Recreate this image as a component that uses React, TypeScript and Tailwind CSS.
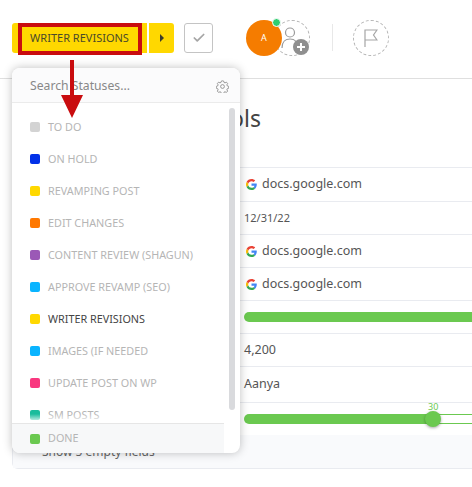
import { Check } from "lucide-react";

const statuses = [
  { name: "TO DO", color: "bg-[#d3d3d3]" },
  { name: "ON HOLD", color: "bg-[#0231e8]" },
  { name: "REVAMPING POST", color: "bg-[#ffd800]" },
  { name: "EDIT CHANGES", color: "bg-[#ff7800]" },
  { name: "CONTENT REVIEW (SHAGUN)", color: "bg-[#9b59b6]" },
  { name: "APPROVE REVAMP (SEO)", color: "bg-[#0ab4ff]" },
  { name: "WRITER REVISIONS", color: "bg-[#ffd800]", active: true },
  { name: "IMAGES (IF NEEDED", color: "bg-[#0ab4ff]" },
  { name: "UPDATE POST ON WP", color: "bg-[#f9377f]" },
  { name: "SM POSTS", color: "bg-[#1bbc9c]" },
];

function GoogleIcon() {
  return (
    <svg width="11" height="11" viewBox="0 0 48 48" className="ml-[2px] mr-[5px] shrink-0">
      <path fill="#EA4335" d="M24 9.500c3.500 0 6.700 1.200 9.200 3.600l6.900-6.900C35.900 2.400 30.500 0 24 0 14.600 0 6.500 5.400 2.600 13.200l8 6.200C12.500 13.700 17.800 9.500 24 9.500z" />
      <path fill="#4285F4" d="M47 24.500c0-1.600-.1-3.100-.4-4.500H24v9h12.900c-.6 3-2.200 5.500-4.700 7.200l7.700 6C44.400 38 47 31.800 47 24.500z" />
      <path fill="#FBBC05" d="M10.500 28.600c-.5-1.400-.8-3-.8-4.600s.3-3.200.8-4.600l-8-6.200C.9 16.500 0 20.100 0 24s.9 7.500 2.600 10.800l7.900-6.200z" />
      <path fill="#34A853" d="M24 48c6.500 0 11.900-2.100 15.900-5.800l-7.700-6c-2.200 1.400-4.900 2.300-8.200 2.300-6.200 0-11.500-4.200-13.400-9.900l-8 6.200C6.500 42.600 14.600 48 24 48z" />
    </svg>
  );
}

function LinkValue() {
  return (
    <div className="flex items-center text-[12.5px] text-[#555]">
      <GoogleIcon />
      docs.google.com
    </div>
  );
}

function Row({ children, className = "h-[33px]" }: { children: React.ReactNode; className?: string }) {
  return <div className={`flex items-center border-b border-[#e9ebf0] pl-[231px] ${className}`}>{children}</div>;
}

function StatusMenu() {
  return (
    <div className="absolute left-3 top-[68px] flex h-[385px] w-[228px] flex-col overflow-hidden rounded-lg bg-white shadow-[0_0_10px_rgba(0,0,0,0.25)]">
      <div className="flex h-[35px] shrink-0 items-center justify-between border-b border-[#ebebeb] bg-[#fbfbfc] pl-[18px] pr-[11px] pt-[2px]">
        <span className="text-[12.2px] text-[#888]">Search Statuses...</span>
        <svg width="13" height="13" viewBox="0 0 24 24" fill="none" stroke="#8a8a8a" strokeWidth="1.6">
          <path d="M12 1.500l2 .3.8 2.700 1.900.8 2.500-1.300 2.300 2.600-1.400 2.300.7 2 2.700.9v3.400l-2.700.9-.7 2 1.400 2.300-2.300 2.600-2.500-1.300-1.900.8-.8 2.700h-4l-.8-2.700-1.900-.8-2.500 1.300-2.300-2.600 1.400-2.300-.7-2-2.700-.9v-3.400l2.700-.9.7-2-1.400-2.300 2.300-2.600 2.500 1.300 1.900-.8.800-2.700z" />
          <circle cx="12" cy="12" r="3.500" />
        </svg>
      </div>
      <div className="flex-1 overflow-hidden pt-2">
        {statuses.map((s) => (
          <div key={s.name} className="flex h-8 items-center pl-[18px]">
            <span className={`mr-2 h-[10px] w-[10px] rounded-[2px] ${s.color}`} />
            <span className={`text-[10.8px] ${s.active ? "text-[#444]" : "text-[#b5b5b5]"}`}>{s.name}</span>
          </div>
        ))}
      </div>
      <div className="absolute bottom-[30px] left-0 h-[9px] w-[212px] bg-gradient-to-b from-transparent to-white" />
      <div className="absolute bottom-0 left-0 flex h-[30px] w-[212px] items-center border-t border-[#e6e6e6] bg-[#f7f8f9] pl-[18px]">
        <span className="mr-2 h-[10px] w-[10px] rounded-[2px] bg-[#6bc950]" />
        <span className="text-[10.8px] text-[#b5b5b5]">DONE</span>
      </div>
      <div className="absolute right-[5px] top-10 h-[302px] w-[6px] rounded-sm bg-[#d9dadd]" />
    </div>
  );
}

export default function App() {
  return (
    <div className="relative h-[487px] w-[472px] overflow-hidden bg-white font-['Noto_Sans',sans-serif]">
      {/* top bar */}
      <div className="flex h-[79px] items-start border-b border-[#dfdfdf] pl-3 pt-[23px]">
        <div className="flex h-[30px] items-stretch">
          <div className="flex w-[135px] items-center justify-center rounded-l-[3px] bg-[#ffd800] text-[11px] text-[#4a4a2a]">
            WRITER REVISIONS
          </div>
          <div className="ml-[2px] flex w-[25px] items-center justify-center rounded-r-[3px] bg-[#ffd800]">
            <svg width="6" height="8" viewBox="0 0 6 8">
              <path d="M1 0l4 4-4 4z" fill="#3d3d2a" />
            </svg>
          </div>
        </div>
        <div className="ml-[10px] flex h-[30px] w-[29px] items-center justify-center rounded-[3px] border border-[#c4c4c4]">
          <Check size={14} strokeWidth={3} className="text-[#a5a5a5]" />
        </div>
        <div className="relative ml-[33px] -mt-[3px] h-9 w-9">
          <div className="absolute left-[28px] top-0 h-9 w-9 rounded-full border border-dashed border-[#b5b5b5]" />
          <svg width="24" height="28" viewBox="0 0 24 28" fill="none" stroke="#9a9a9a" strokeWidth="1.200" className="absolute left-[35px] top-[6px]">
            <circle cx="9" cy="6.500" r="4.500" />
            <path d="M1 22c0-6 3.500-9 8-9s8 3 8 9" />
          </svg>
          <div className="absolute left-[47px] top-[19px] flex h-4 w-4 items-center justify-center rounded-full bg-[#8f8f8f]">
            <svg width="10" height="10" viewBox="0 0 10 10">
              <path d="M5 1v8M1 5h8" stroke="#fff" strokeWidth="2" />
            </svg>
          </div>
          <div className="absolute inset-0 flex items-center justify-center rounded-full bg-[#f57c00] text-[9px] text-white">A</div>
          <div className="absolute left-[26px] top-[-2px] box-content h-[7px] w-[7px] rounded-full border border-white bg-[#2ecd6f]" />
        </div>
        <div className="ml-[50px] mt-[1px] h-[27px] w-px bg-[#e8e8e8]" />
        <div className="ml-[20px] -mt-[3px] flex h-9 w-9 items-center justify-center rounded-full border border-dashed border-[#b5b5b5]">
          <svg width="14" height="18" viewBox="0 0 14 18" fill="none" stroke="#a5a5a5" strokeWidth="1.200">
            <path d="M1 18V1h12l-3.500 5L13 11H1" />
          </svg>
        </div>
      </div>

      {/* page body */}
      <div className="h-[88px] pl-[205px] pt-[23px] text-[23px] leading-8 text-[#444]">Tools</div>
      <div className="ml-3 w-[700px] rounded-b-md border-x border-b border-[#e9ebf0]">
        <div className="border-t border-[#e9ebf0]">
          <Row className="h-[34px]"><LinkValue /></Row>
          <Row><span className="text-[11px] text-[#555]">12/31/22</span></Row>
          <Row><LinkValue /></Row>
          <Row><LinkValue /></Row>
          <Row>
            <div className="h-[10px] w-full rounded-l-full bg-[#6bc950]" />
          </Row>
          <Row><span className="text-[12.5px] text-[#555]">4,200</span></Row>
          <Row className="h-[36px]"><span className="text-[12.5px] text-[#555]">Aanya</span></Row>
          <div className="flex h-[32px] items-start pl-[231px] pt-[11px]">
            <div className="relative flex h-[10px] w-full items-stretch">
              <div className="h-full w-[188px] rounded-l-full bg-[#6bc950]" />
              <div className="flex-1 border-y border-[#6bc950]" />
              <div className="absolute left-[181px] top-[-3px] h-4 w-4 rounded-full bg-[#6bc950] shadow-[0_1px_3px_rgba(0,0,0,0.35)]" />
              <span className="absolute left-[184px] top-[-13px] text-[9px] leading-3 text-[#6bc950]">30</span>
            </div>
          </div>
          <div className="flex h-[33px] items-center bg-[#f9fafc] pl-[29px] text-[12px] text-[#666]">
            Show 5 empty fields
          </div>
        </div>
      </div>

      <StatusMenu />

      {/* red annotation */}
      <div className="pointer-events-none absolute left-[18px] top-[23px] h-8 w-[124px] border-4 border-[#c90c0f]" />
      <svg width="24" height="58" viewBox="0 0 24 58" className="pointer-events-none absolute left-[60px] top-[60px]">
        <path d="M10 0h4v35h9L12 58 1 35h9z" fill="#c90c0f" />
      </svg>
    </div>
  );
}
